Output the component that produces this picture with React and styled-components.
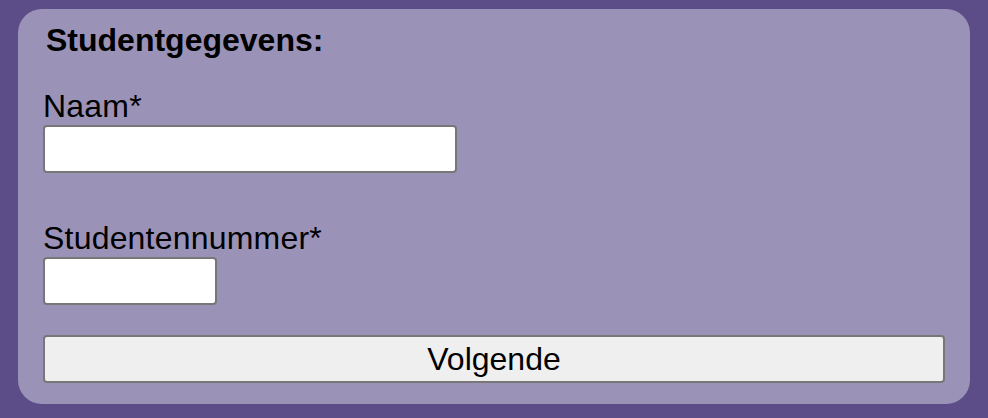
import React from 'react';
import styled, {createGlobalStyle} from 'styled-components';

const GlobalStyle = createGlobalStyle`
  html, body {
    margin: 0;
    padding: 0;
    background: #5c4d89;
    font-family: "Liberation Sans", Arial, sans-serif;
  }
`
const Page = styled.div`
  padding: 9px 18px 14px 18px;
`
const Card = styled.form`
  background: #9a93b7;
  border-radius: 24px;
  padding: 13px 25px 21px 25px;
  display: flex;
  flex-direction: column;
`
const Title = styled.h2`
  margin: 0 0 30px 3px;
  font-size: 32px;
  font-weight: bold;
  line-height: 36px;
  color: #000;
`
const Field = styled.div`
  display: flex;
  flex-direction: column;
  align-items: flex-start;
  margin-bottom: ${props => props.gap}px;
`
const Label = styled.label`
  font-size: 32px;
  letter-spacing: 0.2px;
  line-height: 36px;
  color: #000;
  margin-bottom: 1px;
`
const Input = styled.input`
  box-sizing: border-box;
  width: ${props => props.width}px;
  height: 48px;
  border: 2px solid #777;
  border-radius: 4px;
  background: #fff;
  font-size: 24px;
  padding: 0 8px;
`
const Button = styled.button`
  box-sizing: border-box;
  width: 100%;
  height: 48px;
  border: 2px solid #777;
  border-radius: 4px;
  background: #efefef;
  font-family: "Liberation Sans", Arial, sans-serif;
  font-size: 32px;
  color: #000;
  cursor: pointer;
`

function App() {
  return (
    <Page>
      <GlobalStyle/>
      <Card onSubmit={e => e.preventDefault()}>
        <Title>Studentgegevens:</Title>
        <Field gap={47}>
          <Label htmlFor="naam">Naam*</Label>
          <Input id="naam" width={414}/>
        </Field>
        <Field gap={30}>
          <Label htmlFor="nummer">Studentennummer*</Label>
          <Input id="nummer" width={174}/>
        </Field>
        <Button type="submit">Volgende</Button>
      </Card>
    </Page>
  )
}

export default App;
